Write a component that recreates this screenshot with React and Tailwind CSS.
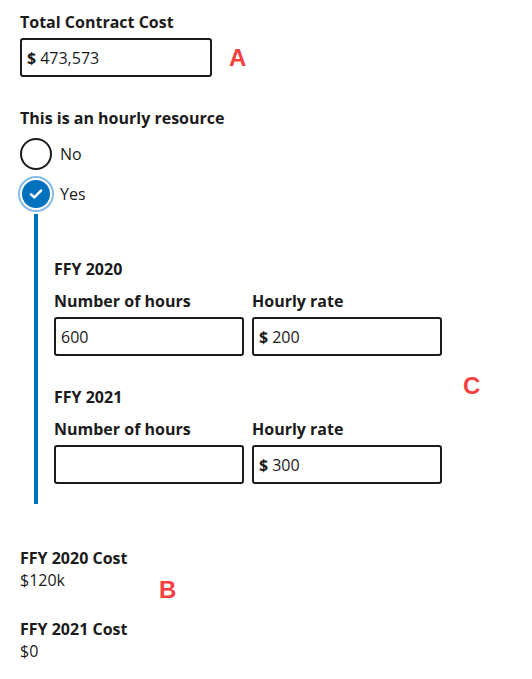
import React from "react";

const font = { fontFamily: '"Open Sans", "Noto Sans", sans-serif' };

function TextInput({ value, dollar, className = "" }) {
  return (
    <div
      className={`h-[39px] border-2 border-[#1b1b1b] rounded-[3px] bg-white flex items-center pl-[5px] text-[16px] text-[#1b1b1b] ${className}`}
    >
      {dollar && <span className="font-bold mr-[4px]">$</span>}
      <span>{value}</span>
    </div>
  );
}

function Label({ children, className = "" }) {
  return (
    <div className={`text-[16px] leading-[20px] font-bold text-[#1b1b1b] ${className}`}>
      {children}
    </div>
  );
}

function Mark({ children, className = "" }) {
  return (
    <span
      className={`absolute text-[24px] leading-none font-bold text-[#f5403f] ${className}`}
      style={{ fontFamily: '"Liberation Sans", Arial, sans-serif' }}
    >
      {children}
    </span>
  );
}

export default function App() {
  return (
    <div className="w-[532px] h-[679px] bg-white pl-[20px] pt-[12px] text-[#1b1b1b]" style={font}>
      <Label>Total Contract Cost</Label>
      <div className="mt-[6px] flex items-center">
        <TextInput value="473,573" dollar className="w-[192px]" />
        <span
          className="ml-[17px] text-[24px] leading-none font-bold text-[#f5403f]"
          style={{ fontFamily: '"Liberation Sans", Arial, sans-serif' }}
        >
          A
        </span>
      </div>

      <Label className="mt-[31px]">This is an hourly resource</Label>
      <div className="mt-[10px] flex flex-col gap-[8px]">
        <div className="flex items-center">
          <div className="w-[32px] h-[32px] rounded-full border-2 border-[#1b1b1b] bg-white" />
          <span className="ml-[8px] text-[16px]">No</span>
        </div>
        <div className="flex items-center">
          <div className="w-[32px] h-[32px] rounded-full bg-[#0071bc] border-2 border-white ring-2 ring-[#84bbe8] flex items-center justify-center">
            <svg width="14" height="12" viewBox="0 0 14 12" fill="none">
              <path d="M2 6.3 L5.3 9.4 L12 2.6" stroke="#fff" strokeWidth="2.6" strokeLinecap="round" strokeLinejoin="round" />
            </svg>
          </div>
          <span className="ml-[8px] text-[16px]">Yes</span>
        </div>
      </div>

      <div className="mt-[4px] flex relative">
        <div className="ml-[14px] w-[4px] bg-[#0071bc]" />
        <div className="pl-[16px] pt-[45px] pb-[20px]">
          <Label>FFY 2020</Label>
          <div className="mt-[12px] grid grid-cols-[190px_190px] gap-x-[8px]">
            <Label>Number of hours</Label>
            <Label>Hourly rate</Label>
            <TextInput value="600" className="mt-[6px]" />
            <TextInput value="200" dollar className="mt-[6px]" />
          </div>
          <Label className="mt-[31px]">FFY 2021</Label>
          <div className="mt-[12px] grid grid-cols-[190px_190px] gap-x-[8px]">
            <Label>Number of hours</Label>
            <Label>Hourly rate</Label>
            <TextInput value="" className="mt-[6px]" />
            <TextInput value="300" dollar className="mt-[6px]" />
          </div>
        </div>
        <Mark className="left-[443px] top-[160px]">C</Mark>
      </div>

      <div className="relative mt-[44px]">
        <Label>FFY 2020 Cost</Label>
        <div className="text-[16px] leading-[24px]">$120k</div>
        <Label className="mt-[27px]">FFY 2021 Cost</Label>
        <div className="text-[16px] leading-[24px]">$0</div>
        <Mark className="left-[139px] top-[30px]">B</Mark>
      </div>
    </div>
  );
}
